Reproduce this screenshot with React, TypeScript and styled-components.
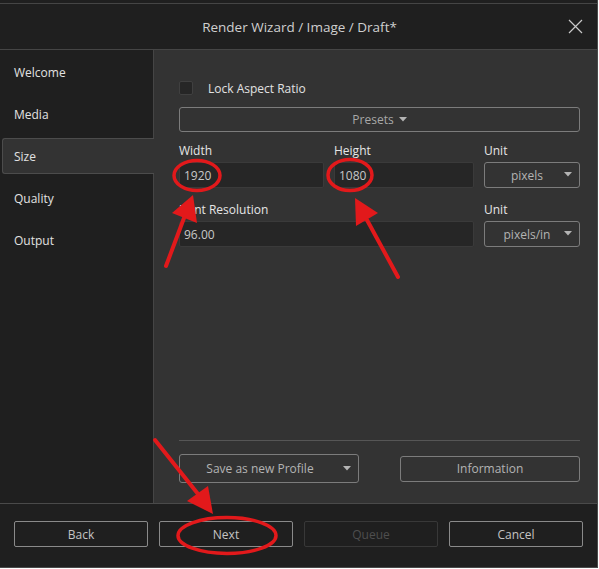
import React from 'react';
import styled, { createGlobalStyle } from 'styled-components';

const GlobalStyle = createGlobalStyle`
  html, body {
    margin: 0;
    padding: 0;
    background: #ffffff;
  }
  body {
    font-family: "Open Sans", "Noto Sans", sans-serif;
  }
  * {
    box-sizing: border-box;
  }
`;

interface TabProps {
  $active?: boolean;
}

interface ButtonProps {
  $disabled?: boolean;
}

const steps = ['Welcome', 'Media', 'Size', 'Quality', 'Output'];

// small filled down-arrow used on drop-down buttons
const DownArrow: React.FC = () => (
  <svg width="8" height="5" viewBox="0 0 8 5">
    <polygon points="0,0 8,0 4,4.5" fill="#b4b4b4" />
  </svg>
);

const App: React.FC = () => {
  return (
    <>
      <GlobalStyle />
      <Window>
        <TitleBar>
          <Title>Render Wizard / Image / Draft*</Title>
          <CloseButton aria-label="Close">
            <svg width="15" height="15" viewBox="0 0 15 15">
              <path d="M1 1 L14 14 M14 1 L1 14" stroke="#c9c9c9" strokeWidth="1.2" />
            </svg>
          </CloseButton>
        </TitleBar>

        <Body>
          <Sidebar>
            {steps.map((step) => (
              <StepRow key={step}>
                <Tab $active={step === 'Size'}>{step}</Tab>
              </StepRow>
            ))}
          </Sidebar>

          <Content>
            <CheckRow>
              <CheckBox />
              <CheckLabel>Lock Aspect Ratio</CheckLabel>
            </CheckRow>

            <WideButton>
              Presets <DownArrow />
            </WideButton>

            <FieldGrid>
              <Field>
                <Label>Width</Label>
                <TextInput>1920</TextInput>
              </Field>
              <Field>
                <Label>Height</Label>
                <TextInput>1080</TextInput>
              </Field>
              <Field>
                <Label>Unit</Label>
                <Select>
                  pixels
                  <SelectCaret>
                    <DownArrow />
                  </SelectCaret>
                </Select>
              </Field>
              <Field $span={2}>
                <Label>Print Resolution</Label>
                <TextInput>96.00</TextInput>
              </Field>
              <Field>
                <Label>Unit</Label>
                <Select>
                  pixels/in
                  <SelectCaret>
                    <DownArrow />
                  </SelectCaret>
                </Select>
              </Field>
            </FieldGrid>

            <Spacer />
            <Divider />

            <ProfileRow>
              <ProfileButton $tall>
                Save as new Profile
                <SelectCaret>
                  <DownArrow />
                </SelectCaret>
              </ProfileButton>
              <ProfileButton>Information</ProfileButton>
            </ProfileRow>
          </Content>
        </Body>

        <Footer>
          <FooterButton>Back</FooterButton>
          <FooterButton>Next</FooterButton>
          <FooterButton $disabled>Queue</FooterButton>
          <FooterButton>Cancel</FooterButton>
        </Footer>

        {/* red markup drawn on top of the dialog */}
        <Markup width="599" height="569" viewBox="0 0 599 569">
          <g fill="none" stroke="#e2191b" strokeWidth="3.5">
            <ellipse cx="197" cy="175.5" rx="23" ry="15" />
            <ellipse cx="350" cy="175" rx="22" ry="15.5" />
            <ellipse cx="227" cy="535.5" rx="49" ry="18" />
          </g>
          <g stroke="#e2191b" strokeWidth="4" strokeLinecap="round">
            <line x1="166" y1="266" x2="184" y2="218" />
            <line x1="398" y1="277" x2="367" y2="220" />
            <line x1="155" y1="440" x2="198" y2="494" />
          </g>
          <g fill="#e2191b">
            <polygon points="193,195 172,213 197,223" />
            <polygon points="355,198 356,226 378,213" />
            <polygon points="213,514 187,501 208,486" />
          </g>
        </Markup>
      </Window>
    </>
  );
};

const Window = styled.div`
  position: relative;
  width: 598px;
  height: 568px;
  padding-top: 3px;
  display: flex;
  flex-direction: column;
  background: #1f1f1f;
  border-right: 1px solid #4a4a4a;
  border-bottom: 1px solid #4a4a4a;
  color: #d6d6d6;
`;

const TitleBar = styled.div`
  position: relative;
  height: 47px;
  display: flex;
  align-items: center;
  justify-content: center;
  border-top: 1px solid #454545;
  border-bottom: 1px solid #454545;
  background: #1f1f1f;
`;

const Title = styled.div`
  font-size: 13.5px;
  color: #cfcfcf;
  padding-left: 2px;
`;

const CloseButton = styled.div`
  position: absolute;
  right: 14px;
  top: 15px;
  width: 15px;
  height: 15px;
  display: flex;
`;

const Body = styled.div`
  flex: 1;
  display: flex;
  min-height: 0;
`;

const Sidebar = styled.div`
  width: 154px;
  padding-top: 1px;
  border-right: 1px solid #454545;
  background: #1f1f1f;
`;

const StepRow = styled.div`
  height: 42px;
  padding: 3px 0 3px 2px;
  display: flex;
`;

const Tab = styled.div<TabProps>`
  flex: 1;
  display: flex;
  align-items: center;
  padding-left: 11px;
  font-size: 12px;
  color: #e2e2e2;
  border-radius: 3px 0 0 3px;
  border: 1px solid ${(props: TabProps) => (props.$active ? '#4c4c4c' : 'transparent')};
  border-right: none;
  background: ${(props: TabProps) => (props.$active ? '#333333' : 'transparent')};
  margin-right: ${(props: TabProps) => (props.$active ? '-1px' : '0')};
  position: relative;
`;

const Content = styled.div`
  flex: 1;
  display: flex;
  flex-direction: column;
  padding: 31px 17px 20px 25px;
  background: #333333;
`;

const CheckRow = styled.div`
  display: flex;
  align-items: center;
  height: 14px;
  gap: 15px;
`;

const CheckBox = styled.div`
  width: 14px;
  height: 14px;
  border-radius: 2px;
  background: #262626;
  border: 1px solid #404040;
`;

const CheckLabel = styled.span`
  font-size: 12px;
  color: #e2e2e2;
`;

const WideButton = styled.div`
  margin-top: 12px;
  height: 25px;
  display: flex;
  align-items: center;
  justify-content: center;
  gap: 5px;
  font-size: 12px;
  color: #a8a8a8;
  border: 1px solid #7c7c7c;
  border-radius: 3px;

  svg {
    margin-top: -1px;
  }
`;

const FieldGrid = styled.div`
  margin-top: 11px;
  display: grid;
  grid-template-columns: 145px 140px 1fr;
  column-gap: 10px;
  row-gap: 14px;
`;

const Field = styled.div<{ $span?: number }>`
  display: flex;
  flex-direction: column;
  gap: 4px;
  grid-column: span ${(props) => props.$span ?? 1};
`;

const Label = styled.div`
  font-size: 12px;
  line-height: 15px;
  color: #e6e6e6;
`;

const TextInput = styled.div`
  height: 26px;
  display: flex;
  align-items: center;
  padding-left: 4px;
  font-size: 12px;
  color: #c8c8c8;
  background: #262626;
  border: 1px solid #3a3a3a;
  border-radius: 2px;
`;

const Select = styled.div`
  position: relative;
  height: 26px;
  display: flex;
  align-items: center;
  justify-content: center;
  padding-right: 10px;
  font-size: 12px;
  color: #b4b4b4;
  border: 1px solid #7c7c7c;
  border-radius: 3px;
`;

const SelectCaret = styled.span`
  position: absolute;
  right: 7px;
  top: 50%;
  transform: translateY(-60%);
  display: flex;
`;

const Spacer = styled.div`
  flex: 1;
`;

const Divider = styled.div`
  height: 1px;
  background: #565656;
`;

const ProfileRow = styled.div`
  margin-top: 13px;
  display: flex;
  align-items: center;
  justify-content: space-between;
`;

const ProfileButton = styled.div<{ $tall?: boolean }>`
  position: relative;
  width: 180px;
  height: ${(props) => (props.$tall ? '29px' : '26px')};
  display: flex;
  align-items: center;
  justify-content: center;
  padding-right: ${(props) => (props.$tall ? '18px' : '0')};
  font-size: 12px;
  color: #b4b4b4;
  border: 1px solid #7c7c7c;
  border-radius: 3px;
`;

const Footer = styled.div`
  height: 64px;
  display: flex;
  gap: 11px;
  padding: 17px 13px 0 14px;
  border-top: 1px solid #4a4a4a;
  background: #1f1f1f;
`;

const FooterButton = styled.div<ButtonProps>`
  width: 134px;
  height: 26px;
  display: flex;
  align-items: center;
  justify-content: center;
  font-size: 12px;
  color: ${(props: ButtonProps) => (props.$disabled ? '#4e4e4e' : '#c4c4c4')};
  border: 1px solid ${(props: ButtonProps) => (props.$disabled ? '#383838' : '#8a8a8a')};
  border-radius: 2px;
`;

const Markup = styled.svg`
  position: absolute;
  left: 0;
  top: 0;
  pointer-events: none;
`;

export default App;
